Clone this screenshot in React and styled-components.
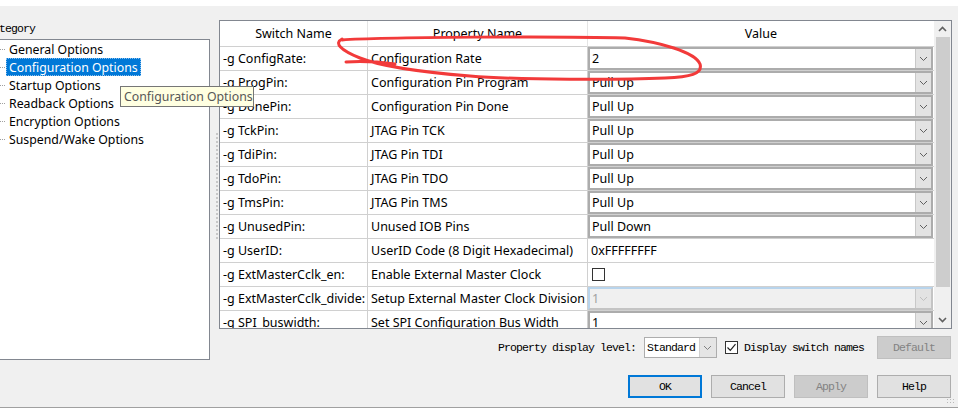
import styled, { createGlobalStyle } from 'styled-components';

const GlobalStyle = createGlobalStyle`
  html, body {
    margin: 0;
    padding: 0;
  }
  body {
    background: #fff;
    width: 958px;
    height: 411px;
    overflow: hidden;
    font-family: "Noto Sans", "Liberation Sans", sans-serif;
    color: #000;
  }
`;

const mono = `"Liberation Mono", "DejaVu Sans Mono", monospace`;

const Window = styled.div`
  position: relative;
  width: 958px;
  height: 408px;
  box-sizing: border-box;
  background: #f0f0f0;
  border-bottom: 1px solid #a0a0a0;
  display: flex;
  flex-direction: column;
`;

const TopBand = styled.div`
  height: 6px;
  background: #fff;
`;

const Main = styled.div`
  display: flex;
  padding-top: 14px;
`;

const LeftPane = styled.div`
  width: 210px;
  display: flex;
  flex-direction: column;
`;

const PaneLabel = styled.div`
  height: 19px;
  box-sizing: border-box;
  padding-top: 2px;
  margin-left: -13px;
  font-family: ${mono};
  font-size: 11.5px;
  letter-spacing: -0.9px;
  line-height: 14px;
`;

const Tree = styled.div`
  height: 321px;
  box-sizing: border-box;
  background: #fff;
  border: 1px solid #828790;
  border-left: none;
`;

const TreeItem = styled.div`
  position: relative;
  height: 18px;
  display: flex;
  align-items: center;
  padding-left: 6px;
  font-size: 12.3px;

  &::before {
    content: '';
    position: absolute;
    left: 0;
    top: 9px;
    width: 5px;
    border-top: 1px dotted #a0a0a0;
  }
`;

const TreeLabel = styled.span`
  display: inline-flex;
  align-items: center;
  height: 18px;
  box-sizing: border-box;
  padding: 0 3px;
  background: ${(p) => (p.selected ? '#0078d7' : 'transparent')};
  color: ${(p) => (p.selected ? '#fff' : '#000')};
  outline: ${(p) => (p.selected ? '1px dotted #8cc0ee' : 'none')};
  outline-offset: -1px;
  white-space: nowrap;
`;

const Tooltip = styled.div`
  position: absolute;
  left: 120px;
  top: 86px;
  width: 134px;
  height: 21px;
  box-sizing: border-box;
  background: #ffffe1;
  border: 1px solid #767676;
  color: #575757;
  font-size: 12.3px;
  display: flex;
  align-items: center;
  padding-left: 3px;
  white-space: nowrap;
`;

const Splitter = styled.div`
  width: 9px;
  display: flex;
`;

const Grip = styled.div`
  margin-top: 113px;
  margin-left: 6px;
  width: 2px;
  height: 108px;
  background: repeating-linear-gradient(to bottom, #c8c8c8 0 2px, transparent 2px 4px);
`;

const RightPane = styled.div`
  width: 733px;
  display: flex;
  flex-direction: column;
`;

const Table = styled.div`
  height: 309px;
  box-sizing: border-box;
  border: 1px solid #828790;
  background: #fff;
  display: flex;
`;

const Grid = styled.div`
  flex: 1;
  overflow: hidden;
  display: grid;
  grid-template-columns: 148px 220px 1fr;
  grid-auto-rows: 24px;
  grid-template-rows: 26px;
  font-size: 12.5px;
`;

const HeadCell = styled.div`
  display: flex;
  align-items: center;
  justify-content: center;
  box-sizing: border-box;
  border-right: ${(p) => (p.last ? 'none' : '1px solid #e5e5e5')};
  border-bottom: 1px solid #d0d0d0;
  padding-bottom: 1px;
`;

const Cell = styled.div`
  display: flex;
  align-items: center;
  box-sizing: border-box;
  border-right: 1px solid #d0d0d0;
  border-bottom: 1px solid #d0d0d0;
  padding-left: 3px;
  white-space: nowrap;
  overflow: hidden;
`;

const ValueCell = styled.div`
  display: flex;
  align-items: stretch;
  box-sizing: border-box;
  border-bottom: 1px solid #d0d0d0;
  padding-right: 1px;
  overflow: hidden;
`;

const Combo = styled.div`
  flex: 1;
  display: flex;
  box-sizing: border-box;
  border: 2px solid ${(p) => (p.disabled ? '#c4c4c4' : '#acacac')};
  border-left-color: ${(p) => (p.disabled ? '#b8d4ec' : '#acacac')};
  border-top-color: ${(p) => (p.disabled ? '#b8d4ec' : '#acacac')};
  background: ${(p) => (p.disabled ? '#f0f0f0' : '#fff')};
  color: ${(p) => (p.disabled ? '#a0a0a0' : '#000')};
`;

const ComboText = styled.div`
  flex: 1;
  display: flex;
  align-items: center;
  padding-left: 2px;
`;

const ComboButton = styled.div`
  width: 15px;
  display: flex;
  align-items: center;
  justify-content: center;
  background: #e3e3e3;
  border-left: 1px solid #c8c8c8;
`;

const PlainValue = styled.div`
  display: flex;
  align-items: center;
  padding-left: 3px;
`;

const Box = styled.div`
  width: 13px;
  height: 13px;
  box-sizing: border-box;
  border: 1px solid #333;
  background: #fff;
  display: flex;
  align-items: center;
  justify-content: center;
  margin-left: 1px;
`;

const Scrollbar = styled.div`
  width: 17px;
  background: #f0f0f0;
  display: flex;
  flex-direction: column;
`;

const ScrollArrow = styled.div`
  height: 16px;
  display: flex;
  align-items: center;
  justify-content: center;
`;

const Thumb = styled.div`
  height: 250px;
  margin: 0 1px 0 2px;
  background: #cdcdcd;
`;

const Spacer = styled.div`
  flex: 1;
`;

const OptionsRow = styled.div`
  margin-top: 7px;
  height: 23px;
  display: flex;
  align-items: center;
  justify-content: flex-end;
  padding-right: 1px;
  font-family: ${mono};
  font-size: 11.5px;
  letter-spacing: -0.9px;
`;

const MonoLabel = styled.span`
  margin-right: ${(p) => p.gap || 0}px;
  white-space: nowrap;
`;

const Select = styled.div`
  width: 73px;
  height: 21px;
  box-sizing: border-box;
  border: 1px solid #adadad;
  background: #fff;
  display: flex;
  margin-right: 8px;
`;

const SelectText = styled.div`
  flex: 1;
  display: flex;
  align-items: center;
  padding-left: 2px;
`;

const SelectButton = styled.div`
  width: 16px;
  background: #e5e5e5;
  border-left: 1px solid #cfcfcf;
  display: flex;
  align-items: center;
  justify-content: center;
`;

const Check = styled(Box)`
  margin: 0 6px 0 0;
`;

const Button = styled.div`
  width: 74px;
  height: 23px;
  box-sizing: border-box;
  display: flex;
  align-items: center;
  justify-content: center;
  background: ${(p) => (p.disabled ? '#cccccc' : '#e1e1e1')};
  color: ${(p) => (p.disabled ? '#838383' : '#000')};
  border: ${(p) => (p.primary ? '2px solid #0078d7' : p.disabled ? '1px solid #bfbfbf' : '1px solid #adadad')};
  font-family: ${mono};
  font-size: 11.5px;
  letter-spacing: -0.9px;
`;

const ButtonRow = styled.div`
  margin-top: 16px;
  display: flex;
  justify-content: flex-end;
  gap: 9px;
  padding-right: 1px;
`;

const Resize = styled.div`
  position: absolute;
  right: 3px;
  bottom: 2px;
  width: 9px;
  height: 7px;
  background: radial-gradient(circle, #b8b8b8 0.8px, transparent 1px) 0 0 / 3px 3px;
`;

const Annotation = styled.svg`
  position: absolute;
  left: 0;
  top: 0;
  pointer-events: none;
`;

const Chevron = ({ up, down, color = '#606060' }) => (
  <svg width="9" height="6" viewBox="0 0 9 6">
    <path
      d={up ? 'M1 5 L4.5 1.5 L8 5' : 'M1 1 L4.5 4.5 L8 1'}
      fill="none"
      stroke={color}
      strokeWidth={up || down ? 1.6 : 1}
    />
  </svg>
);

const treeItems = [
  'General Options',
  'Configuration Options',
  'Startup Options',
  'Readback Options',
  'Encryption Options',
  'Suspend/Wake Options',
];

const rows = [
  { sw: '-g ConfigRate:', prop: 'Configuration Rate', kind: 'combo', value: '2' },
  { sw: '-g ProgPin:', prop: 'Configuration Pin Program', kind: 'combo', value: 'Pull Up' },
  { sw: '-g DonePin:', prop: 'Configuration Pin Done', kind: 'combo', value: 'Pull Up' },
  { sw: '-g TckPin:', prop: 'JTAG Pin TCK', kind: 'combo', value: 'Pull Up' },
  { sw: '-g TdiPin:', prop: 'JTAG Pin TDI', kind: 'combo', value: 'Pull Up' },
  { sw: '-g TdoPin:', prop: 'JTAG Pin TDO', kind: 'combo', value: 'Pull Up' },
  { sw: '-g TmsPin:', prop: 'JTAG Pin TMS', kind: 'combo', value: 'Pull Up' },
  { sw: '-g UnusedPin:', prop: 'Unused IOB Pins', kind: 'combo', value: 'Pull Down' },
  { sw: '-g UserID:', prop: 'UserID Code (8 Digit Hexadecimal)', kind: 'text', value: '0xFFFFFFFF' },
  { sw: '-g ExtMasterCclk_en:', prop: 'Enable External Master Clock', kind: 'check' },
  { sw: '-g ExtMasterCclk_divide:', prop: 'Setup External Master Clock Division', kind: 'disabled', value: '1' },
  { sw: '-g SPI_buswidth:', prop: 'Set SPI Configuration Bus Width', kind: 'combo', value: '1' },
];

const ValueEditor = ({ row }) => {
  if (row.kind === 'text') return <PlainValue>{row.value}</PlainValue>;
  if (row.kind === 'check')
    return (
      <PlainValue>
        <Box />
      </PlainValue>
    );
  const disabled = row.kind === 'disabled';
  return (
    <Combo disabled={disabled}>
      <ComboText>{row.value}</ComboText>
      <ComboButton>
        <Chevron color={disabled ? '#c0c0c0' : '#606060'} />
      </ComboButton>
    </Combo>
  );
};

const App = () => {
  return (
    <>
      <GlobalStyle />
      <Window>
        <TopBand />
        <Main>
          <LeftPane>
            <PaneLabel>Category</PaneLabel>
            <Tree>
              {treeItems.map((t, i) => (
                <TreeItem key={t}>
                  <TreeLabel selected={i === 1}>{t}</TreeLabel>
                </TreeItem>
              ))}
            </Tree>
          </LeftPane>
          <Splitter>
            <Grip />
          </Splitter>
          <RightPane>
            <Table>
              <Grid>
                <HeadCell>Switch Name</HeadCell>
                <HeadCell>Property Name</HeadCell>
                <HeadCell last>Value</HeadCell>
                {rows.map((r) => [
                  <Cell key={r.sw + 'a'}>{r.sw}</Cell>,
                  <Cell key={r.sw + 'b'}>{r.prop}</Cell>,
                  <ValueCell key={r.sw + 'c'}>
                    <ValueEditor row={r} />
                  </ValueCell>,
                ])}
              </Grid>
              <Scrollbar>
                <ScrollArrow>
                  <Chevron up />
                </ScrollArrow>
                <Thumb />
                <Spacer />
                <ScrollArrow>
                  <Chevron down />
                </ScrollArrow>
              </Scrollbar>
            </Table>
            <OptionsRow>
              <MonoLabel gap={8}>Property display level:</MonoLabel>
              <Select>
                <SelectText>Standard</SelectText>
                <SelectButton>
                  <Chevron color="#808080" />
                </SelectButton>
              </Select>
              <Check>
                <svg width="11" height="11" viewBox="0 0 11 11">
                  <path d="M1.5 5.5 L4.3 8.3 L9.5 2.2" fill="none" stroke="#222" strokeWidth="1.2" />
                </svg>
              </Check>
              <MonoLabel gap={13}>Display switch names</MonoLabel>
              <Button disabled>Default</Button>
            </OptionsRow>
            <ButtonRow>
              <Button primary>OK</Button>
              <Button>Cancel</Button>
              <Button disabled>Apply</Button>
              <Button>Help</Button>
            </ButtonRow>
          </RightPane>
        </Main>
        <Tooltip>Configuration Options</Tooltip>
        <Resize />
        <Annotation width="958" height="411" viewBox="0 0 958 411">
          <path
            d="M342 40 C 380 37, 560 36, 625 38 C 660 42, 695 52, 700 64 C 703 74, 690 77, 665 78 C 620 80, 520 80, 470 76 C 420 72, 380 66, 360 58 C 340 50, 334 43, 342 39 M 346 62 C 360 61, 380 62, 395 64"
            fill="none"
            stroke="#f23a3a"
            strokeWidth="3"
            strokeLinecap="round"
          />
        </Annotation>
      </Window>
    </>
  );
};

export default App;
